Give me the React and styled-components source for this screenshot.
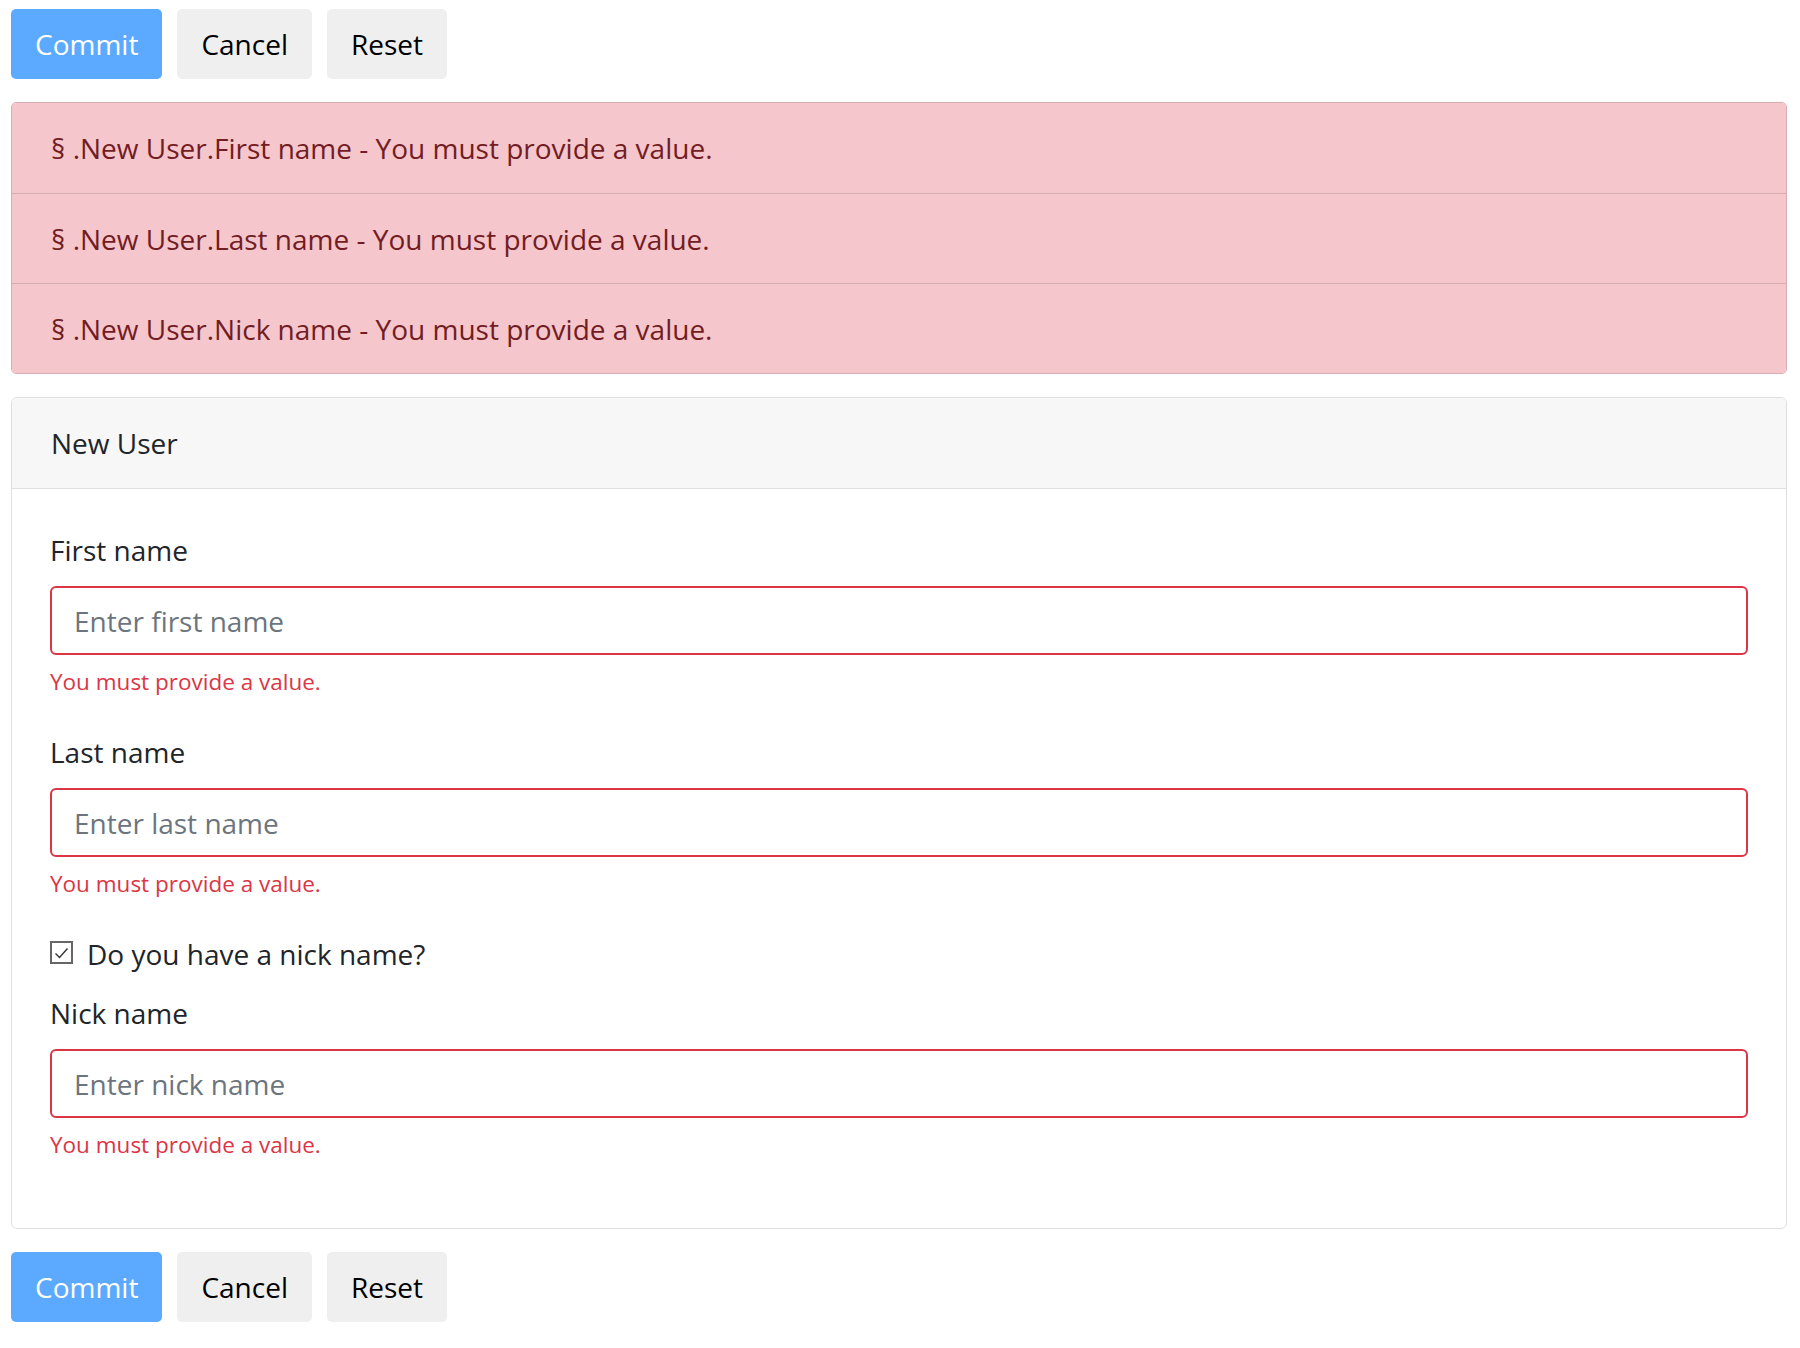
import React from 'react';
import styled, { createGlobalStyle } from 'styled-components';

const GlobalStyle = createGlobalStyle`
    html, body {
        margin: 0;
        padding: 0;
        background: #ffffff;
    }
    body {
        font-family: "Open Sans", "Liberation Sans", sans-serif;
        font-size: 28px;
        color: #212529;
    }
    * {
        box-sizing: border-box;
    }
`;

const errors = [
    { path: '.New User.First name', message: 'You must provide a value.' },
    { path: '.New User.Last name', message: 'You must provide a value.' },
    { path: '.New User.Nick name', message: 'You must provide a value.' },
];

const fields = [
    { label: 'First name', placeholder: 'Enter first name' },
    { label: 'Last name', placeholder: 'Enter last name' },
];

const ButtonBar = () => (
    <Toolbar>
        <Button primary>Commit</Button>
        <Button>Cancel</Button>
        <Button>Reset</Button>
    </Toolbar>
);

const Field = ({ label, placeholder }) => (
    <FormGroup>
        <Label>{label}</Label>
        <Input placeholder={placeholder} />
        <Feedback>You must provide a value.</Feedback>
    </FormGroup>
);

const App = () => {
    return (
        <Page>
            <GlobalStyle />
            <ButtonBar />
            <ErrorList>
                {errors.map((err, idx) => (
                    <ErrorItem key={idx}>{'§ ' + err.path + ' - ' + err.message}</ErrorItem>
                ))}
            </ErrorList>
            <Card>
                <CardHeader>New User</CardHeader>
                <CardBody>
                    {fields.map((f) => (
                        <Field key={f.label} label={f.label} placeholder={f.placeholder} />
                    ))}
                    <CheckRow>
                        <CheckBox>
                            <svg width="15" height="12" viewBox="0 0 15 12">
                                <path d="M1.5 6.5 L5.5 10.5 L13.5 1.5" fill="none" stroke="#333" strokeWidth="1.4" />
                            </svg>
                        </CheckBox>
                        <CheckLabel>Do you have a nick name?</CheckLabel>
                    </CheckRow>
                    <Field label="Nick name" placeholder="Enter nick name" />
                </CardBody>
            </Card>
            <ButtonBar />
        </Page>
    );
};

const Page = styled.div`
    display: flex;
    flex-direction: column;
    gap: 23px;
    padding: 9px 13px 20px 11px;
`;

const Toolbar = styled.div`
    display: flex;
    gap: 15px;
`;

const Button = styled.button`
    height: 70px;
    padding: 0 24px;
    border: none;
    border-radius: 5px;
    font-family: "Open Sans", "Liberation Sans", sans-serif;
    font-size: 28px;
    background-color: ${(p) => (p.primary ? '#5caaff' : '#efefef')};
    color: ${(p) => (p.primary ? '#ffffff' : '#000000')};
    cursor: pointer;
`;

const ErrorList = styled.div`
    display: flex;
    flex-direction: column;
    border-radius: 5px;
    overflow: hidden;
    border: 1px solid #d6adb2;
`;

const ErrorItem = styled.div`
    display: flex;
    align-items: center;
    height: 90px;
    padding: 0 39px;
    background-color: #f5c6cb;
    color: #721c24;
    font-size: 28px;
    & + & {
        border-top: 1px solid #d6adb2;
    }
`;

const Card = styled.div`
    display: flex;
    flex-direction: column;
    border: 1px solid #dfdfdf;
    border-radius: 6px;
    overflow: hidden;
`;

const CardHeader = styled.div`
    display: flex;
    align-items: center;
    height: 91px;
    padding: 0 39px;
    background-color: #f7f7f7;
    border-bottom: 1px solid #dfdfdf;
    font-size: 28px;
    color: #212529;
`;

const CardBody = styled.div`
    display: flex;
    flex-direction: column;
    padding: 39px 38px 35px;
`;

const FormGroup = styled.div`
    display: flex;
    flex-direction: column;
    margin-bottom: 29px;
`;

const Label = styled.label`
    line-height: 44px;
    font-size: 28px;
    margin-bottom: 14px;
    color: #212529;
`;

const Input = styled.input`
    height: 69px;
    padding: 0 22px;
    border: 2px solid #dc3545;
    border-radius: 6px;
    font-family: "Open Sans", "Liberation Sans", sans-serif;
    font-size: 28px;
    color: #495057;
    outline: none;
    &::placeholder {
        color: #6c757d;
    }
`;

const Feedback = styled.div`
    margin-top: 7px;
    line-height: 39px;
    font-size: 22.5px;
    color: #dc3545;
`;

const CheckRow = styled.div`
    display: flex;
    align-items: center;
    gap: 14px;
    height: 44px;
    margin-bottom: 15px;
`;

const CheckBox = styled.span`
    display: flex;
    align-items: center;
    justify-content: center;
    width: 23px;
    height: 23px;
    margin-top: -3px;
    border: 2px solid #666666;
    background: #ffffff;
`;

const CheckLabel = styled.span`
    font-size: 28px;
    color: #212529;
`;

export default App;
